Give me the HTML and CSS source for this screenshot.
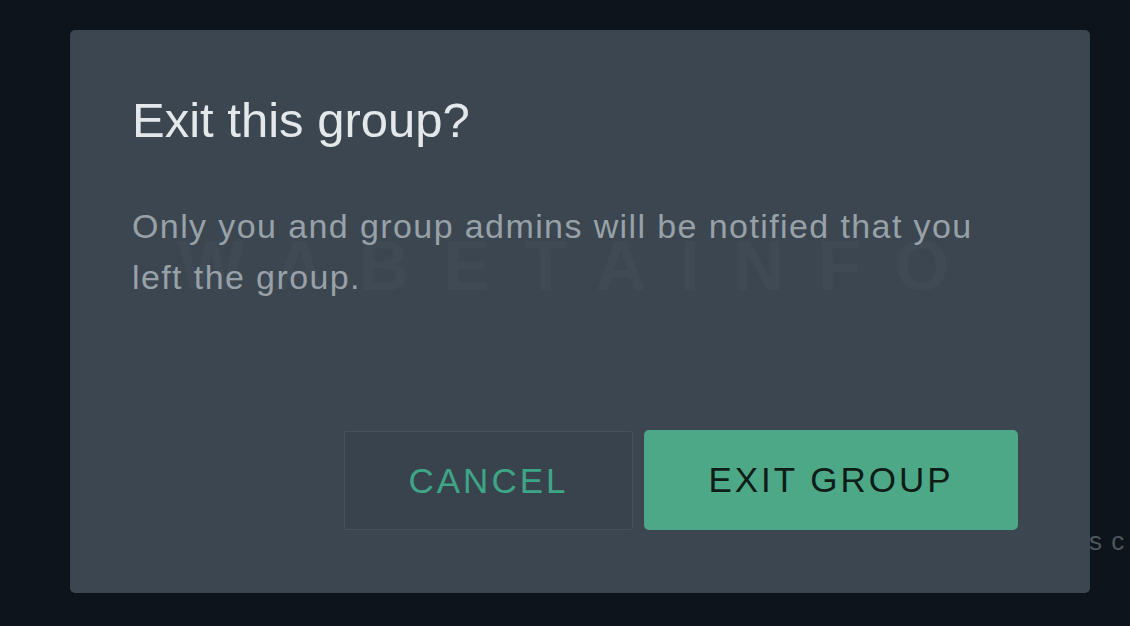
FILE: index.html
```html
<!DOCTYPE html>
<html lang="en">
<head>
<meta charset="utf-8">
<title>Exit this group?</title>
<link rel="stylesheet" href="styles.css">
</head>
<body>
<div class="backdrop-text">s c</div>
<div class="dialog" role="dialog" aria-labelledby="dlg-title">
  <div class="watermark" aria-hidden="true">WABETAINFO</div>
  <h1 class="title" id="dlg-title">Exit this group?</h1>
  <p class="message">Only you and group admins will be notified that you left the group.</p>
  <div class="actions">
    <button class="btn btn-cancel" type="button">CANCEL</button>
    <button class="btn btn-exit" type="button">EXIT GROUP</button>
  </div>
</div>
</body>
</html>
```
FILE: styles.css
```css
html, body {
  margin: 0;
  padding: 0;
}
body {
  width: 1130px;
  height: 626px;
  overflow: hidden;
  background: #0e141b;
  font-family: "Liberation Sans", Arial, sans-serif;
  position: relative;
  box-sizing: border-box;
  padding: 30px 0 0 70px;
}
.backdrop-text {
  position: absolute;
  left: 1089px;
  top: 526px;
  font-size: 26px;
  line-height: 30px;
  color: #4f565d;
  letter-spacing: 1px;
  white-space: nowrap;
}
.dialog {
  position: relative;
  z-index: 1;
  width: 1020px;
  height: 563px;
  box-sizing: border-box;
  background: #3b4650;
  border-radius: 5px;
  padding: 61px 72px 63px 62px;
  display: flex;
  flex-direction: column;
}
.watermark {
  position: absolute;
  left: 108px;
  top: 196px;
  font-size: 70px;
  line-height: 80px;
  font-weight: bold;
  letter-spacing: 34px;
  color: rgba(255, 255, 255, 0.022);
  white-space: nowrap;
  pointer-events: none;
}
.title {
  position: relative;
  margin: 0;
  font-size: 49px;
  line-height: 58px;
  font-weight: normal;
  color: #e4e8eb;
}
.message {
  position: relative;
  margin: 52px 0 0 0;
  font-size: 34px;
  line-height: 51px;
  letter-spacing: 1.4px;
  color: #98a1a8;
  width: 880px;
}
.actions {
  position: relative;
  margin-top: auto;
  display: flex;
  justify-content: flex-end;
  align-items: flex-end;
  gap: 11px;
}
.btn {
  font-family: "Liberation Sans", Arial, sans-serif;
  font-size: 35px;
  letter-spacing: 3px;
  padding: 0;
  cursor: pointer;
  display: flex;
  align-items: center;
  justify-content: center;
  box-sizing: border-box;
}
.btn-cancel {
  width: 289px;
  height: 99px;
  background: rgba(0, 0, 0, 0.03);
  border: 1px solid rgba(255, 255, 255, 0.07);
  border-radius: 2px;
  color: #3ea586;
}
.btn-exit {
  width: 374px;
  height: 100px;
  background: #4ca886;
  border: none;
  border-radius: 5px;
  color: #0f1c18;
}
```
